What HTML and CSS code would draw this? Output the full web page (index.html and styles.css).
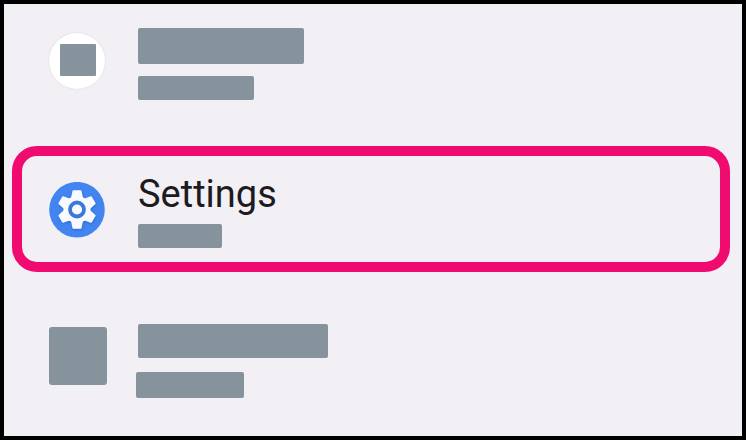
FILE: index.html
```html
<!DOCTYPE html>
<html lang="en">
<head>
  <meta charset="UTF-8">
  <meta name="viewport" content="width=device-width, initial-scale=1.0">
  <title>Settings</title>
  <link rel="stylesheet" href="styles.css">
</head>
<body>
  <div class="menu">
    <div class="item item-first">
      <div class="icon icon-round">
        <div class="block block-icon"></div>
      </div>
      <div class="lines">
        <div class="block line-title"></div>
        <div class="block line-sub"></div>
      </div>
    </div>

    <div class="item item-active">
      <svg class="icon" viewBox="0 0 56 56">
        <defs>
          <filter id="shadow" x="-20%" y="-20%" width="140%" height="140%">
            <feDropShadow dx="0.3" dy="0.9" stdDeviation="0.9" flood-color="#12408f" flood-opacity="0.5"/>
          </filter>
          <path id="tooth" d="M-3.7 -18.4H3.7L5 -12L0 0L-5 -12Z"/>
        </defs>
        <circle cx="28" cy="27.7" r="27.8" fill="#4285f0"/>
        <g transform="translate(28 27.5)" filter="url(#shadow)" fill="#f8faff" stroke="#f8faff" stroke-width="1.6" stroke-linejoin="round">
          <circle r="12.7"/>
          <use href="#tooth"/>
          <use href="#tooth" transform="rotate(60)"/>
          <use href="#tooth" transform="rotate(120)"/>
          <use href="#tooth" transform="rotate(180)"/>
          <use href="#tooth" transform="rotate(240)"/>
          <use href="#tooth" transform="rotate(300)"/>
        </g>
        <circle cx="28" cy="27.5" r="7" fill="#f8faff" stroke="#3b78da" stroke-width="3.8"/>
      </svg>
      <div class="lines">
        <div class="title">Settings</div>
        <div class="block line-short"></div>
      </div>
    </div>

    <div class="item item-last">
      <div class="block block-square"></div>
      <div class="lines">
        <div class="block line-wide"></div>
        <div class="block line-bottom"></div>
      </div>
    </div>
  </div>
</body>
</html>
```

FILE: styles.css
```css
* {
  box-sizing: border-box;
}
body {
  margin: 0;
  font-family: Roboto, "Liberation Sans", sans-serif;
  background-color: #000;
}
.menu {
  width: 746px;
  height: 440px;
  border: 4px solid #000;
  background-color: #f2eff5;
}
.item {
  display: flex;
  align-items: flex-start;
}
.item-first {
  height: 142px;
  padding: 24px 0 0 45px;
}
.item-active {
  height: 126px;
  margin: 0 12px 0 8px;
  padding: 26px 0 0 27px;
  border: 10px solid #ef0b6f;
  border-radius: 25px;
}
.item-last {
  padding: 52px 0 0 45px;
}
.icon {
  flex: none;
  width: 56px;
  height: 56px;
  margin-right: 33px;
}
.icon-round {
  display: flex;
  justify-content: center;
  padding-top: 11px;
  margin-top: 5px;
  border-radius: 50%;
  background-color: #fff;
  box-shadow: 0 0 2px rgba(0,0,0,0.12);
}
.block {
  border-radius: 2px;
  background-color: #87939c;
}
.block-icon {
  width: 36px;
  height: 32px;
  margin-left: 2px;
  border-radius: 1px;
}
.block-square {
  width: 58px;
  height: 58px;
  margin-top: 3px;
  margin-right: 29px;
  border-radius: 3px;
}
.line-title {
  width: 166px;
  height: 36px;
  margin-bottom: 12px;
}
.line-sub {
  width: 116px;
  height: 24px;
}
.title {
  height: 42px;
  color: #1d1b21;
  font-size: 38px;
  line-height: 42px;
  margin-top: -9px;
}
.line-short {
  width: 84px;
  height: 24px;
  margin-top: 9px;
}
.line-wide {
  width: 190px;
  height: 34px;
  margin-left: 2px;
  margin-bottom: 14px;
}
.line-bottom {
  width: 108px;
  height: 26px;
}
```
